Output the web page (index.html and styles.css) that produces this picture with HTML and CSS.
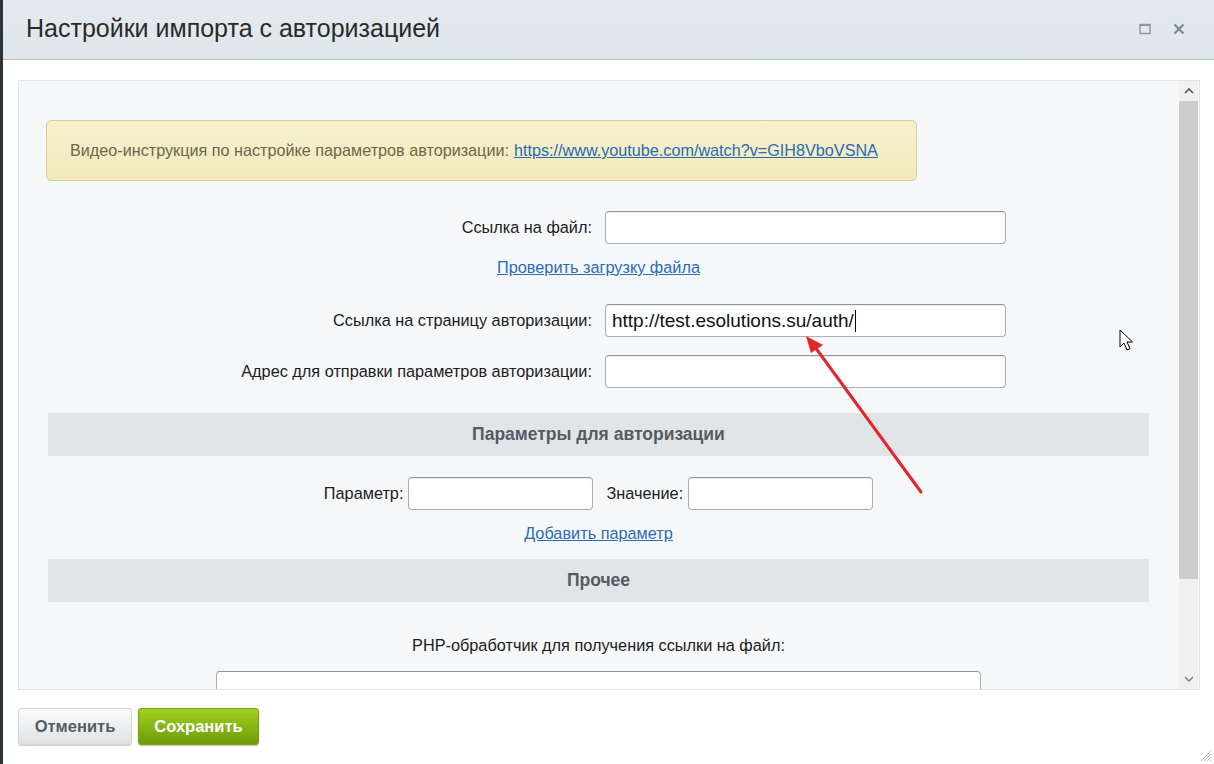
FILE: index.html
```html
<!DOCTYPE html>
<html lang="ru">
<head>
  <meta charset="UTF-8" />
  <title>Настройки импорта с авторизацией</title>
  <link rel="stylesheet" href="styles.css">
</head>
<body>
  <div class="dialog">
    <div class="dialog-head">
      <div class="dialog-title">Настройки импорта с авторизацией</div>
      <div class="head-icons">
        <svg class="head-icon" viewBox="0 0 12 12"><rect x="1" y="1.5" width="10" height="9" fill="none" stroke="#8d959b" stroke-width="1.4"/><rect x="1" y="1" width="10" height="2" fill="#8d959b"/></svg>
        <svg class="head-icon" viewBox="0 0 12 12"><path d="M1.5 1.5l9 9M10.5 1.5l-9 9" stroke="#7e888e" stroke-width="2.2"/></svg>
      </div>
    </div>

    <div class="dialog-body">
      <div class="panel">
        <div class="panel-content">
          <div class="notice">
            Видео-инструкция по настройке параметров авторизации: <a href="#">https://www.youtube.com/watch?v=GIH8VboVSNA</a>
          </div>

          <div class="form-row first">
            <label>Ссылка на файл:</label>
            <input class="field" type="text">
          </div>
          <div class="center-link"><a href="#">Проверить загрузку файла</a></div>

          <div class="form-row second">
            <label>Ссылка на страницу авторизации:</label>
            <div class="field field-text">http://test.esolutions.su/auth/<span class="caret"></span></div>
          </div>
          <div class="form-row third">
            <label>Адрес для отправки параметров авторизации:</label>
            <input class="field" type="text">
          </div>

          <div class="section-title">Параметры для авторизации</div>

          <div class="param-row">
            <label>Параметр:</label>
            <input class="field small" type="text">
            <label class="value-label">Значение:</label>
            <input class="field small" type="text">
          </div>
          <div class="center-link add-link"><a href="#">Добавить параметр</a></div>

          <div class="section-title other">Прочее</div>

          <div class="php-label">PHP-обработчик для получения ссылки на файл:</div>
          <textarea class="php-area"></textarea>
        </div>
        <div class="scrollbar">
          <div class="scroll-btn"><svg viewBox="0 0 10 6"><path d="M1 5l4-4 4 4" fill="none" stroke="#555" stroke-width="1.6"/></svg></div>
          <div class="scroll-thumb"></div>
          <div class="scroll-rest"></div>
          <div class="scroll-btn"><svg viewBox="0 0 10 6"><path d="M1 1l4 4 4-4" fill="none" stroke="#777" stroke-width="1.4"/></svg></div>
        </div>
      </div>
    </div>

    <div class="dialog-foot">
      <button class="btn btn-cancel">Отменить</button>
      <button class="btn btn-save">Сохранить</button>
      <svg class="resize" viewBox="0 0 14 14"><path d="M13 3L3 13M13 6L6 13M13 9L9 13M13 12L12 13" stroke="#b5b9bc" stroke-width="1"/></svg>
    </div>
  </div>

  <!-- annotation overlay -->
  <svg class="arrow" width="1214" height="764" viewBox="0 0 1214 764">
    <line x1="921" y1="492" x2="815" y2="347" stroke="#e3262c" stroke-width="3" stroke-linecap="round"/>
    <path d="M806 336L823 345L811 353Z" fill="#e3262c"/>
  </svg>
  <svg class="cursor" width="14" height="24" viewBox="0 0 14 24">
    <path d="M1 1v17l4-4 3 7 3-1.3-3-6.7h5.5z" fill="#fff" stroke="#000" stroke-width="1"/>
  </svg>
</body>
</html>
```

FILE: styles.css
```css
body {
  margin: 0;
  background-color: #2f3438;
  font-family: 'Liberation Sans', Arial, sans-serif;
  color: #222;
  overflow: hidden;
}

.dialog {
  height: 764px;
  margin-left: 3px;
  background-color: #fff;
  display: flex;
  flex-direction: column;
}

.dialog-head {
  box-sizing: border-box;
  height: 60px;
  flex-shrink: 0;
  background: linear-gradient(#e4ebee, #dde6ea);
  border-bottom: 1px solid #b8c0c4;
  display: flex;
  align-items: center;
  justify-content: space-between;
  padding: 0 29px 2px 23px;
}

.dialog-title {
  font-size: 25px;
  color: #2a2a2a;
}

.head-icons { display: flex; gap: 22px; align-items: center; }
.head-icon { width: 12px; height: 12px; }

.dialog-body {
  padding: 20px 14px 0 15px;
}

.panel {
  height: 608px;
  border: 1px solid #e1e5e8;
  background-color: #f5f7f9;
  display: flex;
}

.panel-content {
  flex: 1;
  overflow: hidden;
  padding: 0 30px 0 29px;
}

.notice {
  margin: 39px 0 0 -2px;
  width: 822px;
  height: 59px;
  padding: 0 24px 0 23px;
  display: flex;
  align-items: center;
  background: linear-gradient(#f6f0cc, #f2eabd);
  border: 1px solid #d9d09d;
  border-radius: 5px;
  font-size: 16.2px;
  color: #6c6748;
  white-space: nowrap;
}

.notice a { color: #2a6bb5; margin-left: 5px; }

.form-row {
  display: grid;
  grid-template-columns: 1fr 1fr;
  column-gap: 13px;
  align-items: center;
}

.form-row label {
  text-align: right;
  font-size: 16.3px;
  color: #1c1c1c;
}

.form-row.first { margin-top: 30px; }
.form-row.second { margin-top: 27px; }
.form-row.third { margin-top: 18px; }

.field {
  box-sizing: border-box;
  width: 401px;
  height: 33px;
  background-color: #fff;
  border: 1px solid #a9afb4;
  border-top-color: #8e959a;
  border-radius: 4px;
  box-shadow: inset 0 1px 1px rgba(0, 0, 0, 0.08);
  font-family: inherit;
  font-size: 16px;
  outline: none;
}

.field-text {
  display: flex;
  align-items: center;
  padding-left: 6px;
  font-size: 19px;
  color: #111;
}

.caret {
  display: inline-block;
  width: 1px;
  height: 22px;
  margin-left: 1px;
  background-color: #000;
}

.center-link {
  text-align: center;
  font-size: 16.3px;
  margin-top: 14px;
}

.center-link a { color: #2a6bb5; }

.section-title {
  margin-top: 25px;
  height: 43px;
  background-color: #e1e5e8;
  display: flex;
  align-items: center;
  justify-content: center;
  font-size: 17.5px;
  font-weight: bold;
  color: #535c61;
}

.param-row {
  margin-top: 21px;
  display: flex;
  justify-content: center;
  align-items: center;
  font-size: 16.3px;
  color: #1c1c1c;
}

.param-row label { margin-right: 5px; }
.param-row .value-label { margin-left: 13px; }

.field.small { width: 185px; }

.add-link { margin-top: 14px; }

.section-title.other { margin-top: 16px; }

.php-label {
  margin-top: 34px;
  text-align: center;
  font-size: 16.3px;
  color: #1c1c1c;
}

.php-area {
  display: block;
  box-sizing: border-box;
  margin: 16px auto 0;
  width: 765px;
  height: 60px;
  border: 1px solid #a9afb4;
  border-top-color: #8e959a;
  border-radius: 4px;
  resize: none;
}

.scrollbar {
  width: 19px;
  margin-right: 1px;
  background-color: #f0f0f0;
  display: flex;
  flex-direction: column;
}

.scroll-btn {
  height: 20px;
  display: flex;
  align-items: center;
  justify-content: center;
}

.scroll-btn svg { width: 10px; height: 6px; }

.scroll-thumb {
  height: 478px;
  background-color: #cdcdcd;
}

.scroll-rest { flex: 1; }

.dialog-foot {
  flex: 1;
  display: flex;
  align-items: flex-start;
  gap: 6px;
  padding: 18px 0 0 15px;
  position: relative;
}

.btn {
  height: 37px;
  border-radius: 3px;
  font-family: inherit;
  font-size: 16.5px;
  font-weight: bold;
  cursor: pointer;
}

.btn-cancel {
  width: 114px;
  color: #545c62;
  background: linear-gradient(#fbfcfc, #dde2e4);
  border: 1px solid #d0d5d8;
  box-shadow: 0 1px 1px rgba(0, 0, 0, 0.2);
}

.btn-save {
  width: 121px;
  color: #fff;
  background: linear-gradient(#a2d022, #6d9c06);
  border: 1px solid #77a10f;
  box-shadow: 0 1px 1px rgba(0, 0, 0, 0.25);
}

.resize {
  position: absolute;
  right: 2px;
  bottom: 2px;
  width: 14px;
  height: 14px;
}

.arrow {
  position: absolute;
  top: 0;
  left: 0;
  pointer-events: none;
}

.cursor {
  position: absolute;
  left: 1119px;
  top: 329px;
}
```
